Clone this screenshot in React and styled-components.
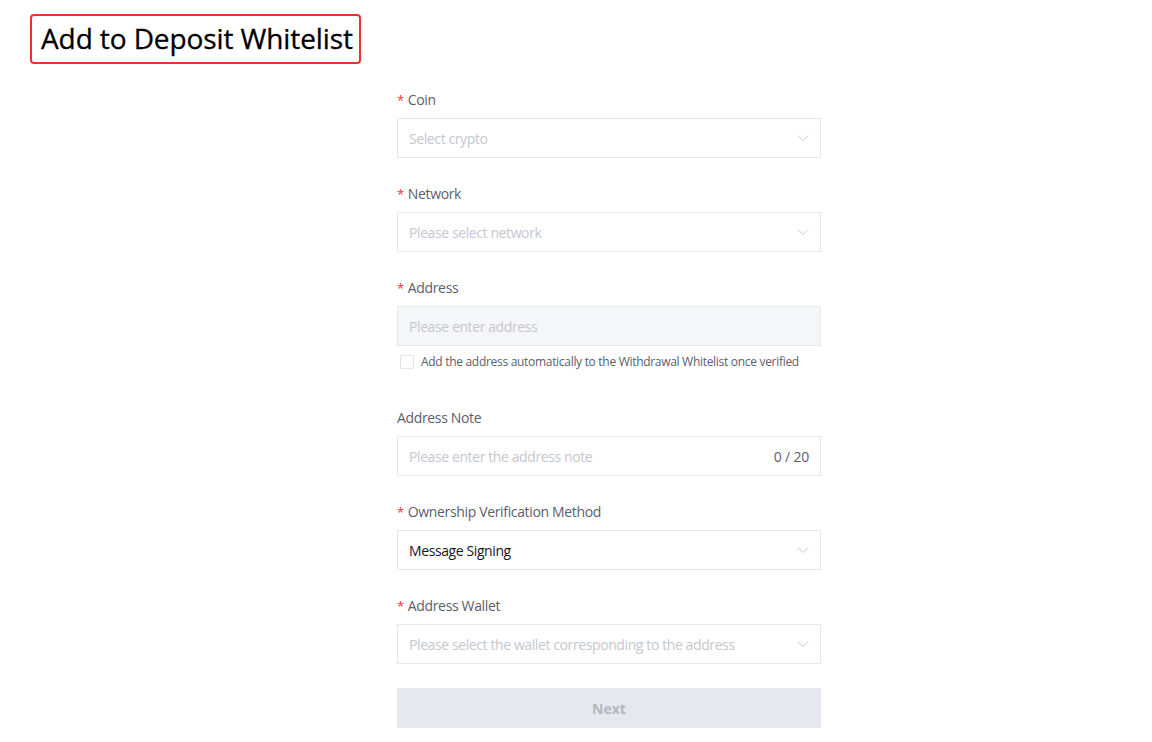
import React from "react";
import styled, { createGlobalStyle } from "styled-components";

const Global = createGlobalStyle`
  html, body { margin: 0; padding: 0; background: #fff; }
  body { font-family: "Open Sans", "Noto Sans", sans-serif; color: #333; }
  * { box-sizing: border-box; }
`;

const Page = styled.div`
  width: 1152px;
  min-height: 742px;
  padding: 14px 0 0 30px;
`;

const Title = styled.h1`
  display: inline-block;
  margin: 0;
  padding: 0 6px 0 9px;
  height: 50px;
  line-height: 45px;
  border: 2px solid #f0302c;
  border-radius: 4px;
  font-size: 28px;
  font-weight: 500;
  color: #000;
  letter-spacing: -0.1px;
  -webkit-text-stroke: 0.3px #000;
`;

const Form = styled.form`
  width: 424px;
  margin: 26px 0 0 367px;
  display: flex;
  flex-direction: column;
`;

const Field = styled.div`
  display: flex;
  flex-direction: column;
  margin-bottom: ${(p) => p.$mb ?? 26}px;
`;

const Label = styled.label`
  height: 20px;
  line-height: 20px;
  font-size: 14px;
  color: #5b5e6b;
  margin-bottom: 8px;
  display: flex;
  align-items: center;
  letter-spacing: -0.35px;
`;

const Star = styled.span`
  color: #f0302c;
  margin-right: 4px;
  font-size: 13px;
`;

const Box = styled.div`
  height: 40px;
  border: 1px solid #e5e7ee;
  background: ${(p) => (p.$disabled ? "#f5f6f8" : "#fff")};
  display: flex;
  align-items: center;
  padding: 0 11px 0 11px;
  font-size: 14px;
  letter-spacing: -0.4px;
  color: ${(p) => (p.$filled ? "#15151f" : "#c4c7cf")};
`;

const Text = styled.span`
  flex: 1;
  white-space: nowrap;
`;

const Count = styled.span`
  color: #5b5e6b;
  font-size: 14px;
  letter-spacing: -0.2px;
`;

const Chevron = () => (
  <svg width="12" height="12" viewBox="0 0 12 12" fill="none">
    <path d="M1 3.5 L6 8.5 L11 3.5" stroke="#c4c7cf" strokeWidth="1" />
  </svg>
);

const CheckRow = styled.div`
  display: flex;
  align-items: center;
  margin-top: 7px;
  padding-left: 3px;
  font-size: 12px;
  letter-spacing: -0.3px;
  color: #5b5e6b;
`;

const CheckBox = styled.span`
  width: 14px;
  height: 14px;
  border: 1px solid #e2e4ea;
  border-radius: 2px;
  margin-right: 7px;
`;

const Button = styled.button`
  height: 40px;
  border: none;
  background: #e6e8ef;
  color: #b3b6c0;
  font-family: inherit;
  font-size: 14px;
  font-weight: 700;
`;

const Select = ({ text, filled }) => (
  <Box $filled={filled}>
    <Text>{text}</Text>
    <Chevron />
  </Box>
);

export default function App() {
  return (
    <Page>
      <Global />
      <Title>Add to Deposit Whitelist</Title>
      <Form>
        <Field>
          <Label><Star>*</Star>Coin</Label>
          <Select text="Select crypto" />
        </Field>
        <Field>
          <Label><Star>*</Star>Network</Label>
          <Select text="Please select network" />
        </Field>
        <Field $mb={38}>
          <Label><Star>*</Star>Address</Label>
          <Box $disabled><Text>Please enter address</Text></Box>
          <CheckRow>
            <CheckBox />
            Add the address automatically to the Withdrawal Whitelist once verified
          </CheckRow>
        </Field>
        <Field>
          <Label>Address Note</Label>
          <Box>
            <Text>Please enter the address note</Text>
            <Count>0 / 20</Count>
          </Box>
        </Field>
        <Field>
          <Label><Star>*</Star>Ownership Verification Method</Label>
          <Select text="Message Signing" filled />
        </Field>
        <Field $mb={24}>
          <Label><Star>*</Star>Address Wallet</Label>
          <Select text="Please select the wallet corresponding to the address" />
        </Field>
        <Button type="button">Next</Button>
      </Form>
    </Page>
  );
}
